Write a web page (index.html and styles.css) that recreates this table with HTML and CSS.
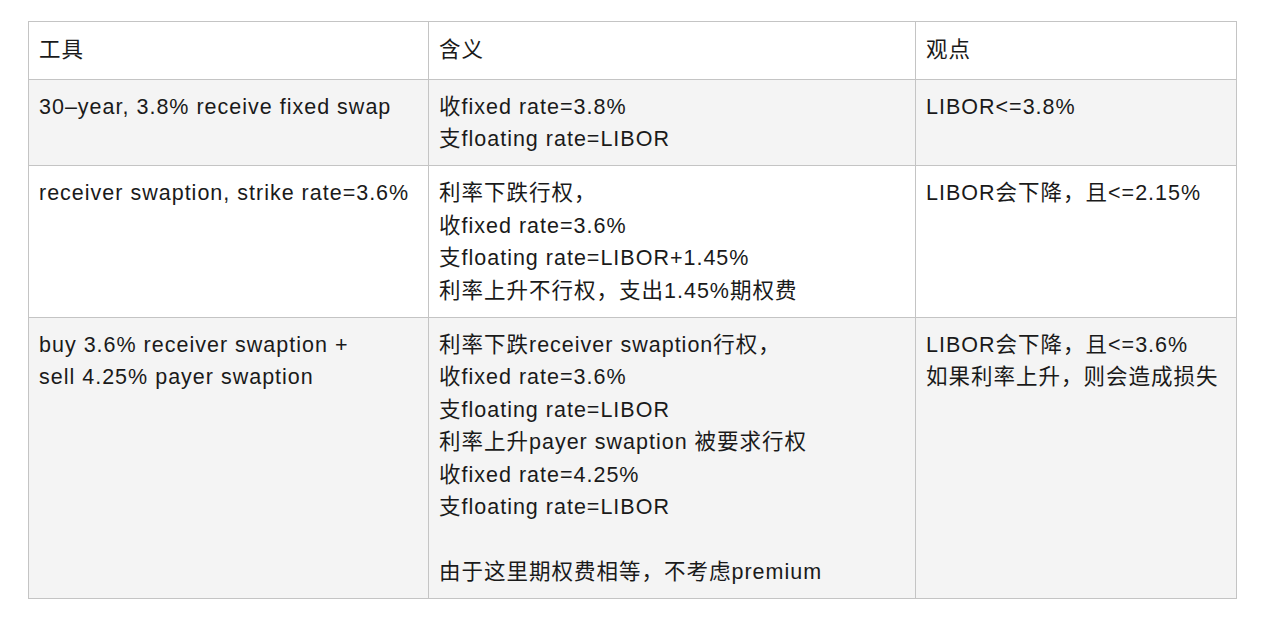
FILE: index.html
```html
<!DOCTYPE html>
<html lang="zh">
<head>
<meta charset="utf-8">
<link rel="stylesheet" href="styles.css">
<title>Swaption</title>
</head>
<body>
<table class="grid">
  <colgroup>
    <col class="c1"><col class="c2"><col class="c3">
  </colgroup>
  <thead>
    <tr><th>工具</th><th>含义</th><th>观点</th></tr>
  </thead>
  <tbody>
    <tr class="shade">
      <td>30–year, 3.8% receive fixed swap</td>
      <td>收fixed rate=3.8%<br>支floating rate=LIBOR</td>
      <td>LIBOR&lt;=3.8%</td>
    </tr>
    <tr>
      <td>receiver swaption, strike rate=3.6%</td>
      <td>利率下跌行权，<br>收fixed rate=3.6%<br>支floating rate=LIBOR+1.45%<br>利率上升不行权，支出1.45%期权费</td>
      <td>LIBOR会下降，且&lt;=2.15%</td>
    </tr>
    <tr class="shade">
      <td>buy 3.6% receiver swaption +<br>sell 4.25% payer swaption</td>
      <td>利率下跌receiver swaption行权，<br>收fixed rate=3.6%<br>支floating rate=LIBOR<br>利率上升payer swaption 被要求行权<br>收fixed rate=4.25%<br>支floating rate=LIBOR<br><br>由于这里期权费相等，不考虑premium</td>
      <td>LIBOR会下降，且&lt;=3.6%<br>如果利率上升，则会造成损失</td>
    </tr>
  </tbody>
</table>
</body>
</html>
```

FILE: styles.css
```css
html, body {
  margin: 0;
  padding: 0;
  background: #ffffff;
}
body {
  padding: 21px 0 0 28px;
  font-family: "Liberation Sans", "Noto Sans CJK SC", sans-serif;
  font-size: 21.5px;
  letter-spacing: 1px;
  color: #1a1a1a;
}
.grid {
  border-collapse: collapse;
  table-layout: fixed;
  width: 1208px;
}
.c1 { width: 400px; }
.c2 { width: 487px; }
.c3 { width: 321px; }
.grid th, .grid td {
  border: 1px solid #c4c4c4;
  text-align: left;
  vertical-align: top;
  font-weight: normal;
  line-height: 32.5px;
  padding: 11px 9px 9.5px 10px;
}
.grid th {
  padding-top: 12px;
  padding-bottom: 12px;
}
.shade td {
  background: #f4f4f4;
}
```
